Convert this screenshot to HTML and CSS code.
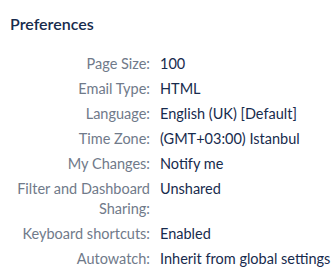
FILE: index.html
```html
<!DOCTYPE html>
<html lang="en">
<head>
    <meta charset="UTF-8">
    <title>Preferences</title>
    <link rel="stylesheet" href="styles.css">
</head>
<body>
    <div class="panel">
        <h2 class="panel-title">Preferences</h2>
        <dl class="prefs">
            <dt>Page Size:</dt>
            <dd>100</dd>
            <dt>Email Type:</dt>
            <dd>HTML</dd>
            <dt>Language:</dt>
            <dd>English (UK) [Default]</dd>
            <dt>Time Zone:</dt>
            <dd>(GMT+03:00) Istanbul</dd>
            <dt>My Changes:</dt>
            <dd>Notify me</dd>
            <dt>Filter and Dashboard Sharing:</dt>
            <dd>Unshared</dd>
            <dt>Keyboard shortcuts:</dt>
            <dd>Enabled</dd>
            <dt>Autowatch:</dt>
            <dd>Inherit from global settings</dd>
        </dl>
    </div>
</body>
</html>
```

FILE: styles.css
```css
body {
    margin: 0;
    background: #fff;
    font-family: Lato, Arial, sans-serif;
    font-size: 14.5px;
    color: #172b4d;
}
.panel {
    padding: 13px 10px 0 10px;
}
.panel-title {
    margin: 0 0 19px 0;
    font-size: 16px;
    font-weight: 600;
    line-height: 22px;
    color: #172b4d;
}
.prefs {
    display: grid;
    grid-template-columns: 140px 1fr;
    column-gap: 10px;
    row-gap: 5px;
    margin: 0;
    line-height: 20px;
}
.prefs dt {
    text-align: right;
    color: #707a8a;
}
.prefs dd {
    margin: 0;
    white-space: nowrap;
}
```
